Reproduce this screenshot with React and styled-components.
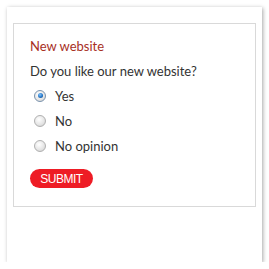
import React, { useState } from 'react';
import styled, { createGlobalStyle } from 'styled-components';

const GlobalStyle = createGlobalStyle`
  html, body {
    margin: 0;
    padding: 0;
    background: #ffffff;
  }
`;

const Card = styled.div`
  box-sizing: border-box;
  width: 255px;
  height: 255px;
  margin: 7px 0 0 7px;
  padding: 16px 6px 0 6px;
  background: #ffffff;
  box-shadow: 1px 1px 4px rgba(0, 0, 0, 0.35);
`;

const Poll = styled.form`
  box-sizing: border-box;
  width: 243px;
  height: 184px;
  border: 1px solid #d9d9d9;
  padding: 14px 16px 0 16px;
  font-family: Lato, 'Open Sans', sans-serif;
  font-size: 13px;
  color: #333333;
`;

const Title = styled.h3`
  margin: 0 0 8px 0;
  font-size: 13px;
  line-height: 16px;
  font-weight: normal;
  color: #a8301f;
`;

const Question = styled.p`
  margin: 0 0 6px 0;
  line-height: 18px;
`;

const Options = styled.div`
  display: flex;
  flex-direction: column;
  gap: 6px;
  margin-left: 4px;
`;

const Option = styled.label`
  display: flex;
  align-items: center;
  gap: 9px;
  height: 19px;
  cursor: pointer;
`;

const Radio = styled.span`
  position: relative;
  box-sizing: border-box;
  width: 12px;
  height: 12px;
  border-radius: 50%;
  border: 1px solid ${(p) => (p.$checked ? '#7a93ad' : '#b0b0b0')};
  background: radial-gradient(circle at 40% 35%, #ffffff 0%, #e4e4e4 60%, #c8c8c8 100%);

  &::after {
    content: '';
    display: ${(p) => (p.$checked ? 'block' : 'none')};
    position: absolute;
    left: 2.5px;
    top: 2.5px;
    width: 5px;
    height: 5px;
    border-radius: 50%;
    background: radial-gradient(circle at 40% 35%, #7fc4ff 0%, #1f6fc0 60%, #0b3f7a 100%);
  }
`;

const Submit = styled.button`
  margin-top: 14px;
  width: 63px;
  height: 19px;
  padding: 0;
  border: none;
  border-radius: 10px;
  background: #ee1c25;
  color: #ffffff;
  font-family: 'Liberation Sans', Arial, sans-serif;
  font-size: 12px;
  letter-spacing: -0.5px;
  text-transform: uppercase;
  cursor: pointer;
`;

const answers = ['Yes', 'No', 'No opinion'];

function App() {
  const [choice, setChoice] = useState('Yes');

  return (
    <>
      <GlobalStyle />
      <Card>
        <Poll onSubmit={(e) => e.preventDefault()}>
          <Title>New website</Title>
          <Question>Do you like our new website?</Question>
          <Options>
            {answers.map((a) => (
              <Option key={a} onClick={() => setChoice(a)}>
                <Radio $checked={choice === a} />
                {a}
              </Option>
            ))}
          </Options>
          <Submit type="submit">Submit</Submit>
        </Poll>
      </Card>
    </>
  );
}

export default App;
